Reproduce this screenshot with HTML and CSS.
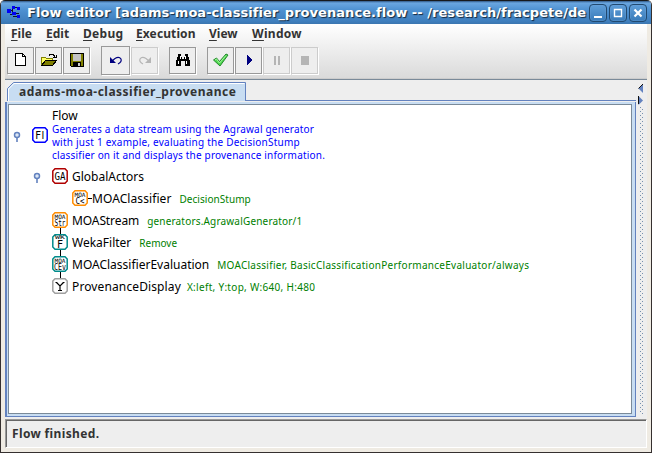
FILE: index.html
```html
<!DOCTYPE html>
<html lang="en">
<head>
<meta charset="utf-8">
<title>Flow editor</title>
<link rel="stylesheet" href="styles.css">
</head>
<body>
<div class="window">
  <header class="titlebar">
    <svg class="app-icon" width="14" height="14" viewBox="0 0 14 14" shape-rendering="crispEdges"><path d="M3 4.500H5M5.500 1V6M5 1.500H12M3 8.500H6M6 10.500H12M8 7.500H12" fill="none" stroke="#112"/><path d="M0 3h4v4H0zM5 0h3v3H5zM10 1h3v3h-3zM5 6h4v3H5zM10 9h3v3h-3z" fill="#0000f5"/></svg>
    <h1 class="title">Flow editor [adams-moa-classifier_provenance.flow -- /research/fracpete/de</h1>
    <div class="controls">
      <span class="control"><svg width="16" height="16"><path d="M4 12H12" stroke="#fff" stroke-width="2"/></svg></span>
      <span class="control"><svg width="16" height="16"><path d="M4.500 4.500h7v7h-7z" fill="none" stroke="#fff" stroke-width="1.400"/></svg></span>
      <span class="control"><svg width="16" height="16"><path d="M4.500 4.500L11.500 11.500M11.500 4.500L4.500 11.500" stroke="#fff" stroke-width="2.200"/></svg></span>
    </div>
  </header>
  <main class="content">
    <div class="top">
      <nav class="menu">
        <span class="m-file"><u>F</u>ile</span><span class="m-edit"><u>E</u>dit</span><span class="m-debug"><u>D</u>ebug</span><span class="m-exec"><u>E</u>xecution</span><span class="m-view"><u>V</u>iew</span><span class="m-window"><u>W</u>indow</span>
      </nav>
      <div class="toolbar">
        <div class="group">
          <button class="tool"><svg width="16" height="16" shape-rendering="crispEdges"><path d="M2.500 1.500h7l3 3v9h-10z" fill="#fff" stroke="#000"/><path d="M9.500 1.500v3h3" fill="none" stroke="#000"/></svg></button>
          <button class="tool"><svg width="18" height="16" shape-rendering="crispEdges"><path d="M1.500 13.500v-8h4l1 1h6v7z" fill="#ffff65" stroke="#808000"/><path d="M1.500 13.500l4-5h11l-4 5z" fill="#808000" stroke="#000"/><path d="M9 3.500l1-1h3l2 2m1-2v3h-3" fill="none" stroke="#000"/></svg></button>
          <button class="tool"><svg width="16" height="16" shape-rendering="crispEdges"><path d="M1.500 1.500h13v13h-12l-1-1z" fill="#808000" stroke="#000"/><path d="M4 2h8v7H4z" fill="#c4c4c4"/><path d="M4 10h8v4H4z" fill="#000"/><path d="M9 11h2v3H9z" fill="#ccc"/></svg></button>
        </div>
        <div class="group">
          <button class="tool hot"><svg width="16" height="16"><path d="M4 9L7 6.500Q11 4 13 7q1 3-3 5" fill="none" stroke="#000080" stroke-width="1.200"/><path d="M2 5v6h6z" fill="#000080"/></svg></button>
          <button class="tool off"><svg width="16" height="16"><path d="M12 9L9 6.500Q5 4 3 7q-1 3 3 5" fill="none" stroke="#b5b5b5" stroke-width="1.200"/><path d="M14 5v6H8z" fill="#b5b5b5"/></svg></button>
        </div>
        <div class="group">
          <button class="tool"><svg width="16" height="16" shape-rendering="crispEdges"><path d="M3 2h3v3h1v2h2V5h1V2h3v3h1v3h1v6h-5V9H6v5H1V8h1V5h1z"/><path d="M5.500 4v3M10.500 4v3M3.500 9v3M11.500 9v3" stroke="#fff"/></svg></button>
        </div>
        <div class="group last">
          <button class="tool"><svg width="18" height="16"><path d="M1.500 8l3-2 3 3.500L14 2l2 1L8 14z" fill="#4ed84e" stroke="#23882c"/><path d="M3 8l1.500-1L7.500 11 14 3.500" fill="none" stroke="#a6f4a0"/></svg></button>
          <button class="tool"><svg width="16" height="16" shape-rendering="crispEdges"><path d="M6 3l5 5-5 5z" fill="#000080"/></svg></button>
          <button class="tool off"><svg width="16" height="16" shape-rendering="crispEdges"><path d="M5 4h2v9H5zM9 4h2v9H9z" fill="#b5b5b5"/></svg></button>
          <button class="tool off"><svg width="16" height="16" shape-rendering="crispEdges"><path d="M4 4h8v9H4z" fill="#b5b5b5"/></svg></button>
        </div>
      </div>
    </div>
    <div class="split">
      <section class="tabs">
        <div class="tabstrip">
          <svg class="tabshape" width="241" height="21"><path d="M2.500 21V8.500L8.500 2.500H240.500V21" fill="#c8ddf2" stroke="#6382bf"/><path d="M3.500 21V9L9 3.500H239.500" fill="none" stroke="#fff"/></svg>
          <span class="tabname">adams-moa-classifier_provenance</span>
          <i class="stripline"></i>
        </div>
        <div class="pane">
          <div class="tree">
            <div class="row root">
              <svg class="handle" width="8" height="12"><circle cx="4" cy="4" r="2.500" fill="#dce7f5" stroke="#6382bf" stroke-width="1.500"/><path d="M4 6.500V11" stroke="#6382bf" stroke-width="1.600"/></svg>
              <svg class="node" width="16" height="16"><path class="box blue" d="M3 .8H13L15.200 3V13L13 15.200H3L.8 13V3z"/><text class="wide" x="8" y="12" font-size="10">Fl</text></svg>
              <div class="rootlabel">
                <div class="name n-flow">Flow</div>
                <div class="note a1">Generates a data stream using the Agrawal generator</div>
                <div class="note a2">with just 1 example, evaluating the DecisionStump</div>
                <div class="note a3">classifier on it and displays the provenance information.</div>
              </div>
            </div>
            <div class="row lvl1 parent">
              <svg class="handle" width="8" height="12"><circle cx="4" cy="4" r="2.500" fill="#dce7f5" stroke="#6382bf" stroke-width="1.500"/><path d="M4 6.500V11" stroke="#6382bf" stroke-width="1.600"/></svg>
              <svg class="node" width="16" height="16"><path class="box red" d="M3 .8H13L15.200 3V13L13 15.200H3L.8 13V3z"/><text x="8" y="12" font-size="10" textLength="11" lengthAdjust="spacingAndGlyphs">GA</text></svg>
              <span class="name n-ga">GlobalActors</span>
            </div>
            <div class="row lvl2">
              <svg class="node" width="16" height="16"><path class="box orange" d="M3 .8H13L15.200 3V13L13 15.200H3L.8 13V3z"/><text x="8" y="6.500" font-size="6" textLength="11" lengthAdjust="spacingAndGlyphs">MOA</text><text x="8" y="13.500" font-size="8" textLength="9" lengthAdjust="spacingAndGlyphs">C&lt;</text></svg>
              <i class="dash"></i><span class="name n-mc">MOAClassifier</span><span class="note g1">DecisionStump</span>
            </div>
            <div class="row lvl1">
              <svg class="node" width="16" height="22"><path d="M8.500 15V22" stroke="#000"/><path class="box orange" d="M3 .8H13L15.200 3V13L13 15.200H3L.8 13V3z"/><text x="8" y="6.500" font-size="6" textLength="11" lengthAdjust="spacingAndGlyphs">MOA</text><text x="8" y="13.500" font-size="8" textLength="11" lengthAdjust="spacingAndGlyphs">Str</text></svg>
              <span class="name n-ms">MOAStream</span><span class="note g2">generators.AgrawalGenerator/1</span>
            </div>
            <div class="row lvl1">
              <svg class="node" width="16" height="22"><path d="M8.500 15V22" stroke="#000"/><path class="box teal" d="M3 .8H13L15.200 3V13L13 15.200H3L.8 13V3z"/><text x="8" y="5" font-size="5" textLength="10" lengthAdjust="spacingAndGlyphs">WK</text><text x="8" y="13.500" font-size="10">F</text></svg>
              <span class="name n-wf">WekaFilter</span><span class="note g3">Remove</span>
            </div>
            <div class="row lvl1">
              <svg class="node" width="16" height="22"><path d="M8.500 15V22" stroke="#000"/><path class="box teal" d="M3 .8H13L15.200 3V13L13 15.200H3L.8 13V3z"/><text x="8" y="6.500" font-size="6" textLength="11" lengthAdjust="spacingAndGlyphs">MOA</text><text x="8" y="13.500" font-size="8" textLength="12" lengthAdjust="spacingAndGlyphs">CEv</text></svg>
              <span class="name n-me">MOAClassifierEvaluation</span><span class="note g4">MOAClassifier, BasicClassificationPerformanceEvaluator/always</span>
            </div>
            <div class="row lvl1">
              <svg class="node" width="16" height="16"><path class="box gray" d="M3 .8H13L15.200 3V13L13 15.200H3L.8 13V3z"/><path d="M4.500 4.500l3.500 3.500 3.500-3.500M8 8v4M6 12.500h4M3.500 4.500h2M10.500 4.500h2" stroke="#000" stroke-width="1.200" fill="none"/></svg>
              <span class="name n-pd">ProvenanceDisplay</span><span class="note g5">X:left, Y:top, W:640, H:480</span>
            </div>
          </div>
        </div>
      </section>
      <aside class="divider">
        <svg width="10" height="26"><path d="M6 3V12L1.500 7.500z" fill="#6382bf"/><path d="M6 3L1.500 7.500" stroke="#111" fill="none"/><path d="M1.500 15V24L6 19.500z" fill="#6382bf"/><path d="M1.500 15V23" stroke="#111"/></svg>
        <svg class="dots" width="6" height="328"><defs><pattern id="dots" width="4" height="4" patternUnits="userSpaceOnUse"><path d="M0 0h1v1H0zM2 2h1v1H2z" fill="#7890ad"/></pattern></defs><rect width="4" height="328" fill="url(#dots)" shape-rendering="crispEdges"/></svg>
      </aside>
    </div>
    <footer class="status"><span>Flow finished.</span></footer>
  </main>
</div>
</body>
</html>
```
FILE: styles.css
```css
* { box-sizing: border-box; }
body { margin: 0; background: #fff; overflow: hidden; }
.window { width: 652px; height: 453px; display: flex; flex-direction: column; background: #efebe3; border: 1px solid #35302f; border-top: 0; border-radius: 5px 5px 0 0; overflow: hidden; }
.titlebar { height: 24px; flex: none; display: flex; align-items: center; padding-left: 6px; background: linear-gradient(#2f5785 0, #6aa6e0 2px, #4e91d1 9px, #3f7fbe 20px, #3b76b0 23px, #244669 23px); border-top: 1px solid #17191c; }
.app-icon { width: 14px; flex: none; }
.title { margin: 0 0 0 6px; width: 560px; flex: none; overflow: hidden; white-space: nowrap; font: bold 13px/22px "DejaVu Sans", sans-serif; letter-spacing: .045px; color: #fff; text-shadow: 1px 1px 1px #14273c; }
.controls { display: flex; gap: 2px; margin-left: 2px; }
.control { width: 18px; height: 18px; flex: none; border: 1px solid #214970; border-radius: 4px; background: linear-gradient(#5f9ed9, #397bb9); box-shadow: inset 0 0 0 1px #6ba3da55; }
.control svg { display: block; }
.content { margin: 0 4px 4px; flex: 1; display: flex; flex-direction: column; background: #eee; font-family: "Noto Sans", sans-serif; color: #333; }
.top { height: 55px; flex: none; background: linear-gradient(#fff, #dadada); border-bottom: 1px solid #ccc; }
.menu { height: 20px; display: flex; font-weight: bold; font-size: 12px; line-height: 20px; padding-left: 6px; }
.menu span { white-space: nowrap; }
.menu u { text-underline-offset: 2px; }
.m-file { width: 35px; } .m-edit { width: 37px; } .m-debug { width: 53px; letter-spacing: .3px; } .m-exec { width: 73px; letter-spacing: .1px; } .m-view { width: 43px; } .m-window { letter-spacing: .3px; }
.toolbar { height: 32px; display: flex; align-items: center; padding: 0 0 0 2px; }
.group { display: flex; gap: 1px; margin-right: 11px; align-items: center; }
.tool { width: 27px; height: 27px; padding: 0; display: grid; place-items: center; background: #eee; border: 1px solid #999; box-shadow: 1px 1px #fff; border-radius: 0; }
.hot { width: 29px; height: 29px; }
.off { border-color: #ccc; }
.split { height: 339px; flex: none; display: flex; border-top: 1px solid #7a8a99; }
.tabs { width: 632px; display: flex; flex-direction: column; padding-bottom: 1px; }
.tabstrip { height: 22px; display: grid; position: relative; }
.tabshape { grid-area: 1/1; display: block; }
.tabname { grid-area: 1/1; z-index: 1; padding: 3px 0 0 14px; font-weight: bold; font-size: 12px; line-height: 18px; letter-spacing: .49px; }
.stripline { position: absolute; left: 240px; right: 1px; bottom: 1px; height: 1px; background: #6382bf; }
.pane { flex: 1; margin-right: 1px; background: #c8ddf2; border: 1px solid #6382bf; border-top: 0; padding: 2px 3px 2px 1px; border-left-width: 2px; }
.tree { height: 100%; background: #fff; border: 1px solid #7a8a99; padding-top: 4px; }
.row { height: 22px; display: flex; align-items: flex-start; white-space: nowrap; }
.root { height: 56px; padding-left: 4px; }
.root .handle { margin: 22px 11px 0 0; }
.root .node { margin: 18px 4px 0 0; }
.rootlabel .note { margin: 0; line-height: 13px; height: 13px; color: #00f; }
.rootlabel .name { line-height: 14px; height: 14px; margin: 0; }
.lvl1 { padding-left: 43px; }
.parent { padding-left: 24px; }
.parent .handle { margin: 7px 11px 0 0; }
.lvl2 { padding-left: 63px; }
.lvl1 .node, .lvl2 .node { margin-top: 3px; }
.handle, .node { flex: none; }
.node { overflow: visible; }
.node text { font-family: "DejaVu Sans Mono", monospace; text-anchor: middle; fill: #000; }
.node .wide { font-family: "DejaVu Sans", sans-serif; letter-spacing: .5px; }
.box { fill: #fff; stroke-width: 1.500px; }
.blue { stroke: #00f; } .red { stroke: #b00000; } .orange { stroke: #ff8c00; } .teal { stroke: #008b8b; } .gray { stroke: #a0a0a0; }
.name { font-size: 12px; line-height: 24px; color: #000; margin-left: 4px; }
.n-ms { letter-spacing: -.1px; }
.n-pd { letter-spacing: .12px; }
.n-mc { letter-spacing: .08px; }
.dash { width: 4px; height: 1px; background: #000; margin-top: 11px; }
.dash + .name { margin-left: 0; }
.note { font-size: 10px; line-height: 25px; color: #008000; margin-left: 8px; }
.a1 { letter-spacing: .19px; } .a2 { letter-spacing: .23px; } .a3 { letter-spacing: .19px; }
.g1 { letter-spacing: .05px; } .g2 { letter-spacing: .18px; } .g4 { letter-spacing: .27px; } .g5 { letter-spacing: .3px; margin-left: 6px; }
.divider { width: 9px; padding: 1px 0 0 0; }
.divider svg { display: block; }
.dots { margin-left: 3px; height: 308px; }
.status { flex: 1; margin: 1px 0 0; border: 1px solid #999; border-right-color: #fff; border-bottom-color: #fff; box-shadow: inset 1px 1px #666; padding-left: 6px; font-weight: bold; font-size: 12px; line-height: 27px; letter-spacing: .36px; }
```
